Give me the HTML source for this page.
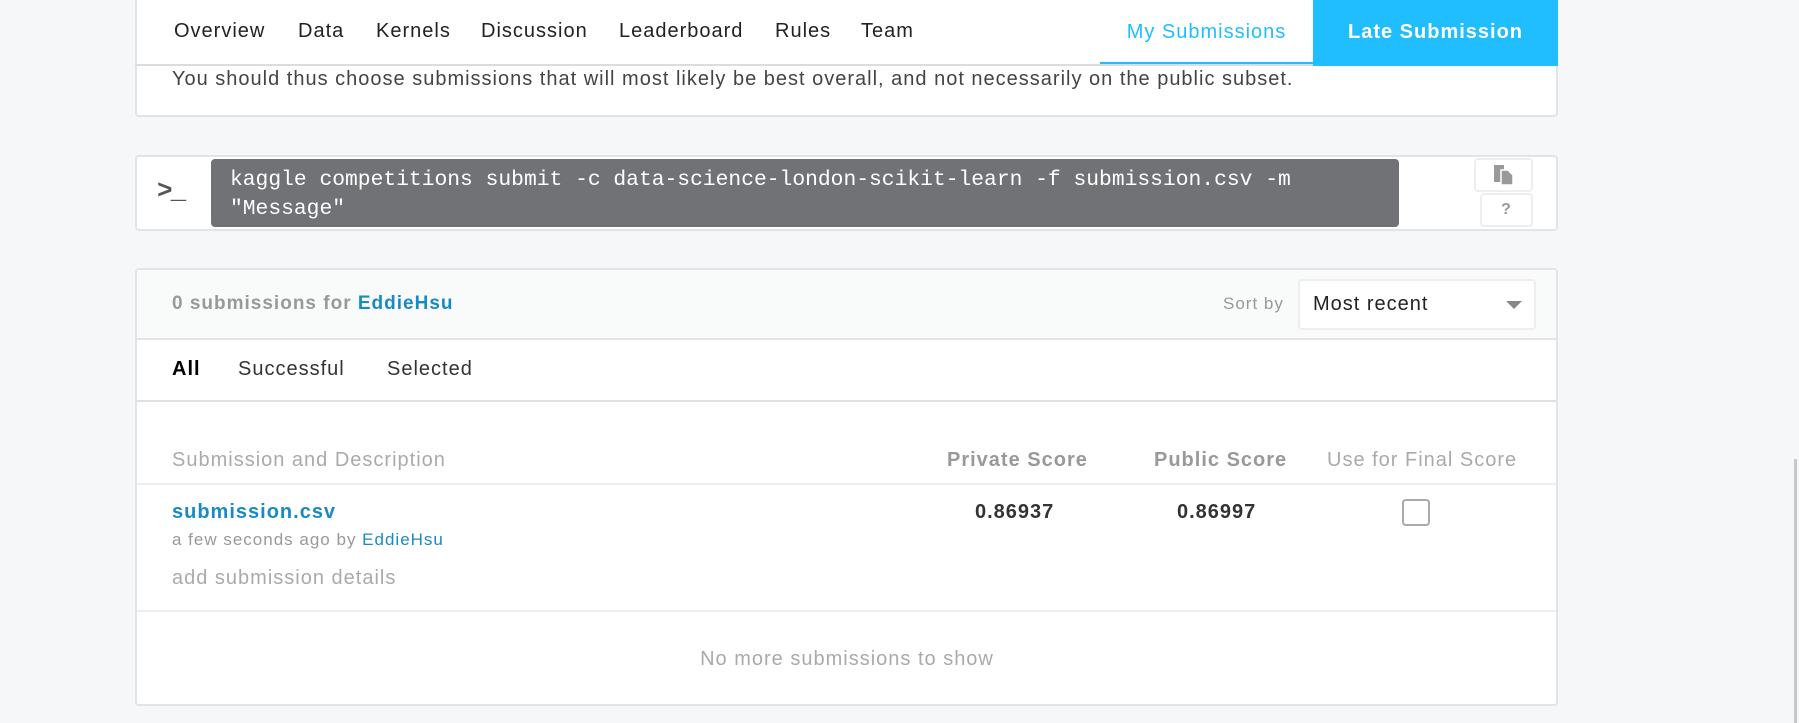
<!DOCTYPE html>
<html><head><meta charset="utf-8"><style>
body{margin:0;width:1799px;height:723px;background:#f5f7f8;font-family:"Liberation Sans",sans-serif;position:relative;overflow:hidden;color:#333;letter-spacing:1px}
.a{position:absolute;white-space:nowrap}
.card{position:absolute;background:#fff;border:2px solid #e2e4e6;border-radius:4px;box-sizing:border-box}
.nav{font-size:20px;color:#222;top:20px}
</style></head><body>
<div class="card" style="left:135px;top:-4px;width:1423px;height:121px"></div>
<div class="a" style="left:135px;top:64px;width:1423px;height:2px;background:#dcdcdc"></div>
<div class="a nav" style="left:174px">Overview</div>
<div class="a nav" style="left:298px">Data</div>
<div class="a nav" style="left:376px">Kernels</div>
<div class="a nav" style="left:481px">Discussion</div>
<div class="a nav" style="left:619px">Leaderboard</div>
<div class="a nav" style="left:775px">Rules</div>
<div class="a nav" style="left:861px">Team</div>
<div class="a" style="left:1100px;top:0;width:213px;height:64px;border-bottom:2px solid #20beff;box-sizing:border-box;text-align:center;line-height:64px;font-size:20px;color:#20beff">My Submissions</div>
<div class="a" style="left:1313px;top:0;width:245px;height:66px;background:#20beff;text-align:center;line-height:64px;font-size:20px;color:#fff;font-weight:bold">Late Submission</div>
<div class="a" style="left:172px;top:68px;font-size:20px;color:#444">You should thus choose submissions that will most likely be best overall, and not necessarily on the public subset.</div>

<div class="card" style="left:135px;top:155px;width:1423px;height:76px"></div>
<div class="a" style="left:157px;top:176px;font-family:'Liberation Mono',monospace;font-size:26px;font-weight:bold;color:#555;letter-spacing:-2px">&gt;_</div>
<div class="a" style="left:211px;top:159px;width:1188px;height:68px;background:#717275;border-radius:4px"></div>
<div class="a" style="left:230px;top:166px;font-family:'Liberation Mono',monospace;font-size:21.3px;color:#fff;line-height:29px;letter-spacing:0">kaggle competitions submit -c data-science-london-scikit-learn -f submission.csv -m<br>"Message"</div>
<div class="a" style="left:1474px;top:158px;width:59px;height:34px;border:2px solid #eee;border-radius:4px;box-sizing:border-box"></div>
<svg class="a" style="left:1493px;top:164px" width="22" height="22"><rect x="1" y="1" width="10" height="17" fill="#999"/><path d="M8 6h7l5 5v10H8z" fill="#999" stroke="#fff" stroke-width="1.5"/></svg>
<div class="a" style="left:1480px;top:193px;width:53px;height:34px;border:2px solid #eee;border-radius:4px;box-sizing:border-box;text-align:center;line-height:30px;font-weight:bold;color:#999;font-size:16px">?</div>

<div class="card" style="left:135px;top:268px;width:1423px;height:438px;overflow:hidden">
<div style="position:absolute;left:0;top:0;right:0;height:68px;background:#f9fafa;border-bottom:2px solid #e5e5e5"></div>
<div style="position:absolute;left:0;right:0;top:130px;height:2px;background:#e0e0e0"></div>
<div style="position:absolute;left:0;right:0;top:213px;height:2px;background:#eee"></div>
<div style="position:absolute;left:0;right:0;top:340px;height:2px;background:#eee"></div>
</div>
<div class="a" style="left:172px;top:293px;font-size:19px;font-weight:bold;color:#999">0 submissions for <span style="color:#1a8ac4">EddieHsu</span></div>
<div class="a" style="left:1223px;top:294px;font-size:17px;color:#999">Sort by</div>
<div class="a" style="left:1298px;top:279px;width:238px;height:51px;background:#fff;border:2px solid #eee;border-radius:4px;box-sizing:border-box"></div>
<div class="a" style="left:1313px;top:293px;font-size:20px;color:#222">Most recent</div>
<div class="a" style="left:1506px;top:301px;width:0;height:0;border-left:8px solid transparent;border-right:8px solid transparent;border-top:8px solid #888"></div>
<div class="a" style="left:172px;top:358px;font-size:20px;font-weight:bold;color:#000">All</div>
<div class="a" style="left:238px;top:358px;font-size:20px;color:#333">Successful</div>
<div class="a" style="left:387px;top:358px;font-size:20px;color:#333">Selected</div>
<div class="a" style="left:172px;top:449px;font-size:20px;color:#aaa">Submission and Description</div>
<div class="a" style="left:947px;top:449px;font-size:20px;font-weight:bold;color:#999">Private Score</div>
<div class="a" style="left:1154px;top:449px;font-size:20px;font-weight:bold;color:#999">Public Score</div>
<div class="a" style="left:1327px;top:449px;font-size:20px;color:#aaa">Use for Final Score</div>
<div class="a" style="left:172px;top:501px;font-size:20px;font-weight:bold;color:#1a8ac4">submission.csv</div>
<div class="a" style="left:172px;top:530px;font-size:17px;color:#999">a few seconds ago by <span style="color:#1a8ac4">EddieHsu</span></div>
<div class="a" style="left:172px;top:567px;font-size:20px;color:#aaa">add submission details</div>
<div class="a" style="left:975px;top:501px;font-size:20px;font-weight:bold;color:#333">0.86937</div>
<div class="a" style="left:1177px;top:501px;font-size:20px;font-weight:bold;color:#333">0.86997</div>
<div class="a" style="left:1402px;top:499px;width:28px;height:27px;border:2px solid #aaa;border-radius:4px;box-sizing:border-box"></div>
<div class="a" style="left:0;width:1694px;text-align:center;top:648px;font-size:20px;color:#aaa">No more submissions to show</div>
<div class="a" style="left:1794px;top:459px;width:3px;height:264px;background:#c8c8c8"></div>
</body></html>
